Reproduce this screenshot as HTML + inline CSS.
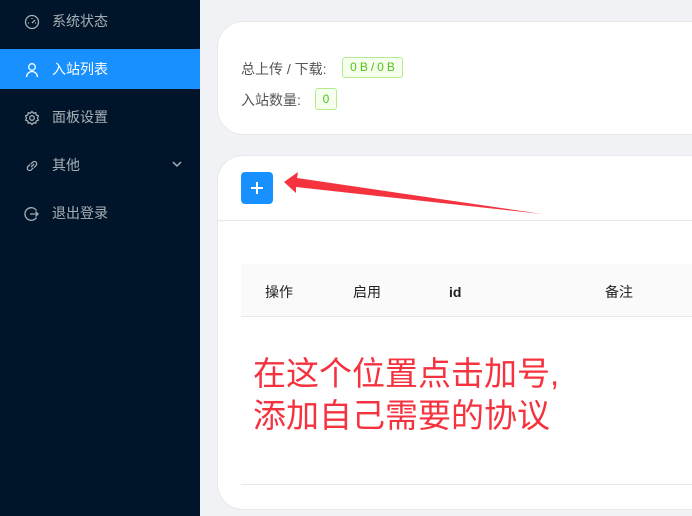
<!DOCTYPE html>
<html><head><meta charset="utf-8"><style>
*{margin:0;padding:0;box-sizing:border-box}
body{width:692px;height:516px;overflow:hidden;background:#f0f2f5;font-family:"Liberation Sans","Noto Sans CJK SC",sans-serif;position:relative}
.side{position:absolute;left:0;top:0;width:200px;height:516px;background:#001529}
.item{position:absolute;left:0;width:200px;height:40px;color:rgba(255,255,255,.65);font-size:14px;line-height:40px;padding-left:52px}
.item.on{background:#1890ff;color:#fff}
.item svg{position:absolute;left:24px;top:13px}
.card{position:absolute;left:217px;width:500px;background:#fff;border:1px solid #e8e8e8;border-radius:26px}
.lbl{position:absolute;font-size:14px;color:#555}
.tag{position:absolute;border:1px solid #b7eb8f;background:#f6ffed;color:#52c41a;font-size:12px;border-radius:3px;text-align:center;line-height:19px;letter-spacing:3px}
.th{position:absolute;top:282px;font-size:14px;line-height:20px;color:#222}
</style></head><body>
<div class="side">
<div class="item" style="top:1px"><svg width="16" height="16" viewBox="0 0 16 16" fill="none" stroke="currentColor" stroke-width="1.3"><circle cx="8" cy="8" r="6.5"/><path d="M8 9l3-3M4 9h1M11 9h1M8 4v1"/></svg>系统状态</div>
<div class="item on" style="top:49px"><svg width="16" height="16" viewBox="0 0 16 16" fill="none" stroke="currentColor" stroke-width="1.3"><circle cx="8" cy="5" r="3.3"/><path d="M2.5 15c0-3 2.5-5.5 5.5-5.5s5.5 2.5 5.5 5.5"/></svg>入站列表</div>
<div class="item" style="top:97px"><svg width="16" height="16" viewBox="0 0 16 16" fill="none" stroke="currentColor" stroke-width="1.3"><circle cx="8" cy="8" r="2.3"/><path d="M8 1.5l1.5 1.7 2.2-.4.6 2.2 2.1.9-.9 2.1.9 2.1-2.1.9-.6 2.2-2.2-.4L8 14.5l-1.5-1.7-2.2.4-.6-2.2-2.1-.9.9-2.1-.9-2.1 2.1-.9.6-2.2 2.2.4z"/></svg>面板设置</div>
<div class="item" style="top:145px"><svg width="16" height="16" viewBox="0 0 16 16" fill="none" stroke="currentColor" stroke-width="1.3"><path d="M7 9l3-3M6 6.5L4 8.5a2.3 2.3 0 003.3 3.3l2-2M10 9.5l2-2A2.3 2.3 0 008.7 4.2l-2 2"/></svg>其他<svg style="left:172px;top:15px" width="10" height="8" viewBox="0 0 10 8" fill="none" stroke="currentColor" stroke-width="1.5"><path d="M1 2l4 4 4-4"/></svg></div>
<div class="item" style="top:193px"><svg width="16" height="16" viewBox="0 0 16 16" fill="none" stroke="currentColor" stroke-width="1.3"><path d="M12.5 4.5A6.3 6.3 0 1012.5 11.5M6 8h8M11.5 5.5L14 8l-2.5 2.5"/></svg>退出登录</div>
</div>
<div class="card" style="top:21px;height:114px"></div>
<div class="lbl" style="left:241px;top:59px">总上传 / 下载:</div>
<div class="tag" style="left:342px;top:57px;width:61px;height:21px;padding-left:3px">0B/0B</div>
<div class="lbl" style="left:241px;top:90px">入站数量:</div>
<div class="tag" style="left:315px;top:88px;width:22px;height:22px;line-height:20px;letter-spacing:0">0</div>
<div class="card" style="top:155px;height:355px"></div>
<div style="position:absolute;left:217px;top:220px;width:475px;height:1px;background:#e8e8e8"></div>
<div style="position:absolute;left:241px;top:172px;width:32px;height:32px;background:#1890ff;border-radius:4px"><svg width="32" height="32"><path d="M16 10v12M10 16h12" stroke="#fff" stroke-width="2"/></svg></div>
<svg style="position:absolute;left:0;top:0" width="692" height="516"><path d="M284 182 L298 172 L297 178 L542 214 L296 187 L296 193 Z" fill="#f5333f"/></svg>
<div style="position:absolute;left:241px;top:264px;width:451px;height:53px;background:#fafafa;border-bottom:1px solid #e8e8e8"></div>
<div class="th" style="left:265px">操作</div>
<div class="th" style="left:353px">启用</div>
<div class="th" style="left:449px;font-weight:bold">id</div>
<div class="th" style="left:605px">备注</div>
<div style="position:absolute;left:241px;top:484px;width:451px;height:1px;background:#e8e8e8"></div>
<div style="position:absolute;left:253px;top:353px;color:#f5333f;font-size:33px;line-height:42px">在这个位置点击加号,<br>添加自己需要的协议</div>
</body></html>
